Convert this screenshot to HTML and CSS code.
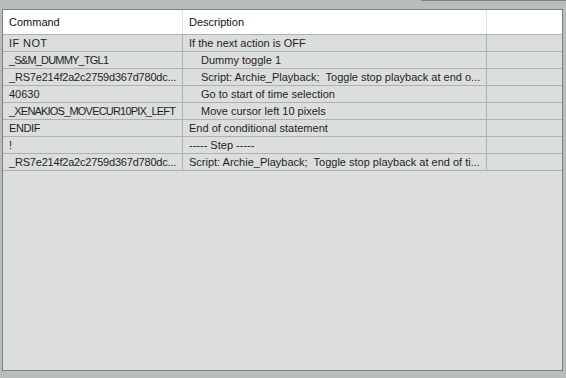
FILE: index.html
```html
<!DOCTYPE html>
<html>
<head>
<meta charset="utf-8">
<link rel="stylesheet" href="styles.css">
</head>
<body>
<div class="top"><div class="tabline"></div></div>
<div class="list">
  <div class="row head">
    <div class="c c1">Command</div>
    <div class="c c2">Description</div>
    <div class="c c3"></div>
  </div>
  <div class="row"><div class="c c1 wide">IF NOT</div><div class="c c2">If the next action is OFF</div><div class="c c3"></div></div>
  <div class="row"><div class="c c1 caps">_S&amp;M_DUMMY_TGL1</div><div class="c c2 ind">Dummy toggle 1</div><div class="c c3"></div></div>
  <div class="row"><div class="c c1 mixed">_RS7e214f2a2c2759d367d780dc...</div><div class="c c2 ind">Script: Archie_Playback;&nbsp; Toggle stop playback at end o...</div><div class="c c3"></div></div>
  <div class="row"><div class="c c1">40630</div><div class="c c2 ind">Go to start of time selection</div><div class="c c3"></div></div>
  <div class="row"><div class="c c1 caps">_XENAKIOS_MOVECUR10PIX_LEFT</div><div class="c c2 ind">Move cursor left 10 pixels</div><div class="c c3"></div></div>
  <div class="row"><div class="c c1 semi">ENDIF</div><div class="c c2">End of conditional statement</div><div class="c c3"></div></div>
  <div class="row"><div class="c c1">!</div><div class="c c2">----- Step -----</div><div class="c c3"></div></div>
  <div class="row"><div class="c c1 mixed">_RS7e214f2a2c2759d367d780dc...</div><div class="c c2">Script: Archie_Playback;&nbsp; Toggle stop playback at end of ti...</div><div class="c c3"></div></div>
</div>
</body>
</html>
```
FILE: styles.css
```css
html, body {
  margin: 0;
  padding: 0;
  background: #b9bdbd;
  width: 566px;
  height: 378px;
  overflow: hidden;
}
body {
  font-family: "Liberation Sans", Arial, sans-serif;
  font-size: 11px;
  color: #1e1e1e;
}
.top {
  height: 9px;
  display: flex;
  justify-content: flex-end;
}
.tabline {
  width: 145px;
  height: 1px;
  background: #7f8488;
}
.list {
  margin-left: 2px;
  width: 559px;
  height: 360px;
  border: 1px solid #7b8085;
  background: #dcdedd;
}
.row {
  display: grid;
  grid-template-columns: 180px 304px 1fr;
  height: 16px;
  border-bottom: 1px solid #a9b3af;
}
.row.head {
  height: 24px;
  background: #fff;
  color: #111;
}
.c {
  display: flex;
  align-items: center;
  white-space: nowrap;
  overflow: hidden;
  border-right: 1px solid #a9b3af;
  padding-left: 6px;
}
.c1 { padding-left: 6px; }
.caps { letter-spacing: -0.8px; }
.semi { letter-spacing: -0.4px; }
.wide { letter-spacing: 0.4px; }
.mixed { letter-spacing: -0.2px; }
.head .c { border-right-color: #e3e3e3; }
.c3 { border-right: none; }
.ind { padding-left: 18px; }
```
